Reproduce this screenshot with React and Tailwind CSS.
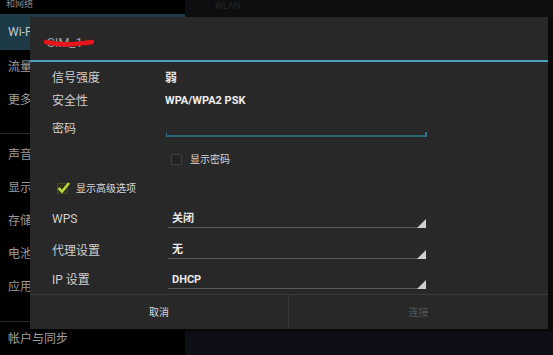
import React from "react";

const font = "font-['Roboto','Noto_Sans_CJK_SC',sans-serif]";

const leftItems = [
	{ label: "Wi-Fi", h: "h-[36px]", active: true },
	{ label: "流量使用情况", h: "h-[33px]" },
	{ label: "更多...", h: "h-[33px]" },
];

const leftItems2 = ["声音", "显示", "存储", "电池", "应用"];

const Spinner = ({ value, line = "bottom-[7px]" }) => (
	<div className="relative ml-[116px] w-[258px] h-full flex items-center">
		<span className="pl-[4px] text-[11px] font-bold text-[#e8e8e8]">
			{value}
		</span>
		<div className={`absolute left-0 right-0 ${line} h-[1px] bg-[#5a5a5a]`} />
		<svg
			className={`absolute right-0 ${line}`}
			width="9"
			height="9"
			viewBox="0 0 9 9"
		>
			<polygon points="9,0 9,9 0,9" fill="#cfcfcf" />
		</svg>
	</div>
);

const Row = ({ label, h, children }) => (
	<div className={`flex items-center ${h}`}>
		<span className="w-[113px] shrink-0 text-[12px] text-[#cfcfcf]">
			{label}
		</span>
		{children}
	</div>
);

const App = () => {
	return (
		<div
			className={`relative w-[553px] h-[355px] overflow-hidden bg-black ${font}`}
		>
			{/* settings screen behind */}
			<div className="flex h-full">
				<div className="w-[185px] flex flex-col">
					<div className="h-[14px] pl-[6px] text-[9px] leading-[8px] text-[#8a8a8a] overflow-hidden">
						和网络
					</div>
					{leftItems.map(item => (
						<div
							key={item.label}
							className={`${item.h} flex items-center pl-[8px] text-[12px] text-[#a0a0a0] ${
								item.active ? "bg-[#1c3b47] text-[#c0c8cc]" : ""
							}`}
						>
							<span className="max-w-[22px] overflow-hidden whitespace-nowrap">
								{item.label}
							</span>
						</div>
					))}
					<div className="h-[18px] border-b border-[#2a2a2a]" />
					<div className="h-[4px]" />
					{leftItems2.map(label => (
						<div
							key={label}
							className="h-[33px] flex items-center pl-[8px] text-[12px] text-[#9a9a9a]"
						>
							<span className="max-w-[22px] overflow-hidden whitespace-nowrap">
								{label}
							</span>
						</div>
					))}
					<div className="h-[19px] border-b border-[#2a2a2a]" />
					<div className="flex-1 flex items-center pl-[8px] text-[12px] text-[#a0a0a0]">
						帐户与同步
					</div>
				</div>
				<div className="flex-1 flex flex-col">
					<div className="h-[17px] bg-[#0e0e10] pl-[30px] text-[9px] text-[#262628]">
						WLAN
					</div>
					<div className="flex-1 bg-[#0a0a0c]" />
					<div className="h-[23px] bg-[#0d0e16]" />
				</div>
			</div>

			{/* dialog */}
			<div className="absolute left-[30px] top-[17px] w-[518px] h-[312px] bg-[#282828] flex flex-col">
				<div className="h-[43px] shrink-0 flex items-center pl-[17px] pt-[8px]">
					<div className="relative text-[13px] text-[#9aa0a6]">
						SIM_1
						<svg
							className="absolute left-[-3px] top-[4px]"
							width="50"
							height="12"
							viewBox="0 0 50 12"
						>
							<path
								d="M2 5 C10 7, 20 8, 30 7 C38 6, 44 6, 48 5"
								stroke="#e8141b"
								strokeWidth="4.5"
								fill="none"
								strokeLinecap="round"
							/>
						</svg>
					</div>
				</div>
				<div className="h-[2px] shrink-0 bg-[#4a9fbd]" />
				<div className="flex-1 flex flex-col pl-[22px] pt-[4px]">
					<Row label="信号强度" h="h-[23px]">
						<span className="text-[12px] font-bold text-[#e0e0e0]">弱</span>
					</Row>
					<Row label="安全性" h="h-[24px]">
						<span className="text-[11px] font-bold text-[#eeeeee]">
							WPA/WPA2 PSK
						</span>
					</Row>
					<div className="flex h-[32px]">
						<span className="w-[113px] shrink-0 pt-[7px] text-[12px] text-[#cfcfcf]">
							密码
						</span>
						<div className="relative w-[261px] ml-[1px] h-full">
							<div className="absolute left-0 right-0 top-[22px] h-[2px] bg-[#2a6577]" />
							<div className="absolute left-0 top-[19px] w-[1px] h-[5px] bg-[#2a6577]" />
							<div className="absolute right-0 top-[19px] w-[2px] h-[5px] bg-[#2f7589]" />
						</div>
					</div>
					<div className="flex items-center h-[29px] pl-[119px] gap-[8px]">
						<div className="w-[11px] h-[11px] border border-[#3c3c3c] bg-[#222]" />
						<span className="text-[10px] text-[#d8d8d8]">显示密码</span>
					</div>
					<div className="flex items-center h-[29px] pl-[5px] gap-[8px]">
						<div className="relative w-[11px] h-[11px] border border-[#454530] bg-[#303018]">
							<svg
								className="absolute left-[-1px] top-[-3px]"
								width="13"
								height="13"
								viewBox="0 0 13 13"
							>
								<path
									d="M1.5 7 L5 10.5 L12 2"
									stroke="#b4d838"
									strokeWidth="2.6"
									fill="none"
								/>
							</svg>
						</div>
						<span className="text-[10px] text-[#d8d8d8]">显示高级选项</span>
					</div>
					<div className="flex items-center h-[32px]">
						<span className="w-[0px] shrink-0 whitespace-nowrap text-[12px] text-[#cfcfcf]">
							WPS
						</span>
						<Spinner value="关闭" />
					</div>
					<div className="flex items-center h-[31px]">
						<span className="w-[0px] shrink-0 whitespace-nowrap text-[12px] text-[#cfcfcf]">
							代理设置
						</span>
						<Spinner value="无" />
					</div>
					<div className="flex items-center h-[28px]">
						<span className="w-[0px] shrink-0 whitespace-nowrap text-[12px] text-[#cfcfcf]">
							IP 设置
						</span>
						<Spinner value="DHCP" line="bottom-[5px]" />
					</div>
				</div>
				<div className="h-[35px] shrink-0 flex border-t border-[#3a3a3a]">
					<div className="w-[259px] flex items-center justify-center text-[10px] text-[#d8d8d8] border-r border-[#3a3a3a]">
						取消
					</div>
					<div className="flex-1 flex items-center justify-center text-[10px] text-[#555555]">
						连接
					</div>
				</div>
			</div>
		</div>
	);
};

export default App;
